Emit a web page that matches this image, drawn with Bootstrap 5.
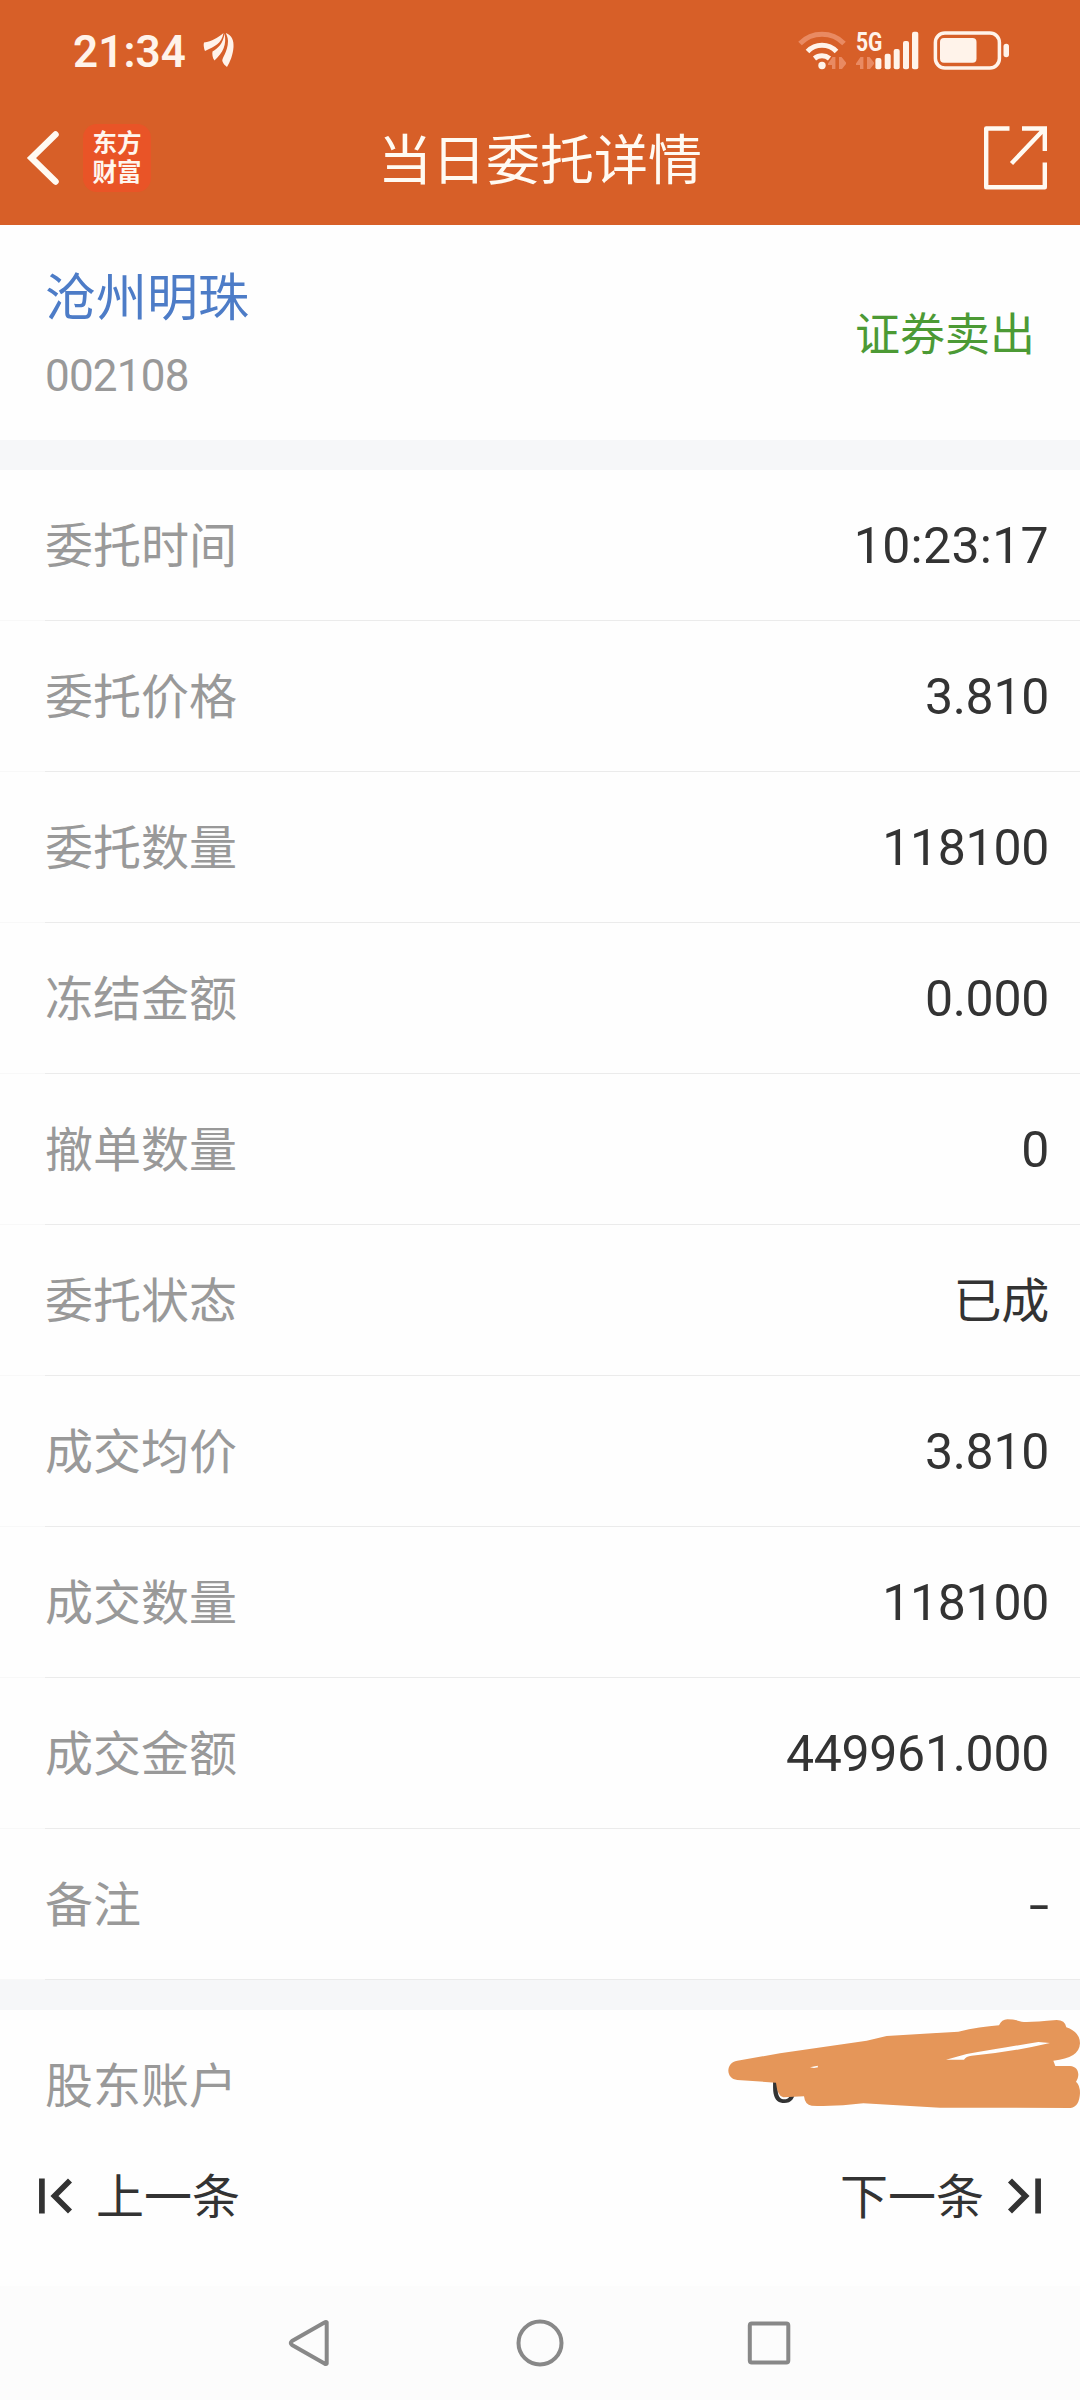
<!DOCTYPE html>
<html lang="zh-CN">
<head>
<meta charset="utf-8">
<meta name="viewport" content="width=device-width, initial-scale=1">
<title>当日委托详情</title>
<link href="https://cdn.jsdelivr.net/npm/bootstrap@5.3.0/dist/css/bootstrap.min.css" rel="stylesheet">
<style>
  body { width: 1080px; height: 2400px; overflow: hidden; background: #fefefe; color: #333; font-family: Roboto, "Noto Sans CJK SC", sans-serif; line-height: 1; }
  svg { display: block; flex: none; }
  .top-area { height: 225px; background: #d75f28; color: #fffaf2; }
  .status-bar { height: 100px; padding: 0 68px 0 73px; }
  .clock { font-size: 44px; font-weight: 600; letter-spacing: .1px; color: #fff3ea; margin-right: 17px; padding-top: 3px; }
  .title-bar { height: 125px; padding: 0 33px 10px 26px; }
  .app-logo { width: 68px; height: 68px; border-radius: 14px; background: #e95427; font-size: 24.5px; font-weight: 700; line-height: 29px; color: #fff6ee; margin-left: 23px; }
  .page-title { font-size: 54px; font-weight: 400; padding-top: 9px; }
  .stock-card { height: 215px; padding: 6px 45px 0; }
  .stock-name { font-size: 51px; color: #4d7cc7; }
  .stock-code { font-size: 44px; letter-spacing: -.8px; color: #999; margin-top: 30px; }
  .side-tag { font-size: 45px; color: #4c9a35; }
  .band { height: 30px; background: #f6f7f9; }
  .entry { height: 151px; padding: 0 31px 0 45px; background: linear-gradient(90deg, #f8f8f8 45px, #ebebeb 45px) bottom / 100% 1px no-repeat; }
  .entry-key { font-size: 48px; color: #999; padding-top: 3px; }
  .entry-val { font-size: 50px; letter-spacing: -.3px; }
  .entry-val.clocked { letter-spacing: .3px; }
  .entry-val.han { font-size: 48px; padding-top: 3px; }
  .entry-val.empty { transform: scaleX(1.45); transform-origin: right; }
  .account { background: none; }
  .scribble { right: 0; top: -20px; }
  .pager { height: 125px; padding: 0 39px 56px; font-size: 48px; }
  .pager span { padding-top: 4px; }
  .sys-nav { height: 114px; background: #fcfcfc; padding: 0 289px 0 288px; }
</style>
<script src="https://cdn.jsdelivr.net/npm/bootstrap@5.3.0/dist/js/bootstrap.bundle.min.js"></script>
</head>
<body>
<header class="top-area">
  <div class="status-bar d-flex align-items-center justify-content-between">
    <div class="d-flex align-items-center">
      <span class="clock">21:34</span>
      <svg width="32" height="36" viewBox="0 0 32 36" fill="#fff3ea">
        <path d="M1 10.500C9 9.500 15 5.500 20.500 1 18.500 12 12 14 2 19Q0 14 1 10.500z"/>
        <path d="M21.500 1.500C24 12 20 21 11.500 28.500 9.500 26 9 22 9.500 19.500 15 16 20 12 21.500 1.500z"/>
        <path d="M22.800 1C29 3 31 9 30.500 15 30 23 27 30 24 35 22 33.500 20.500 32 19.500 29.500 18 27 25 20 25 9 24.800 5 23.500 3 22.800 1z"/>
      </svg>
    </div>
    <svg width="222" height="50" viewBox="0 0 222 50" fill="#fff3ea">
      <g fill="none" stroke="#fff3ea" stroke-width="5">
        <path stroke="#e98a62" d="M10 18.500A31 31 0 0 1 54 18.500"/>
        <path d="M17.500 26.500A20 20 0 0 1 46.500 26.500"/>
        <path d="M24.500 33.500A12 12 0 0 1 39.500 33.500"/>
      </g>
      <circle cx="32" cy="40.500" r="3.700"/>
      <g fill="#e98a62">
        <path id="traffic" d="M45.400 32v12h-3.400v-4h-4v-1.500l4.500-6.500zM49 32h2.500l4.500 5.500v1.500l-4 5h-3z"/>
        <use href="#traffic" x="28"/>
      </g>
      <text x="66" y="25.800" font-size="26" font-weight="700" textLength="26.500" lengthAdjust="spacingAndGlyphs">5G</text>
      <rect x="85.400" y="33" width="6" height="11.300" rx="2"/>
      <rect x="94.700" y="28.700" width="6" height="15.600" rx="2"/>
      <rect x="103.700" y="24" width="6" height="20.300" rx="2"/>
      <rect x="113" y="16" width="6" height="28.300" rx="2"/>
      <rect x="122" y="6.700" width="6.300" height="37.600" rx="2"/>
      <rect x="145.400" y="8" width="64" height="35" rx="9.500" fill="none" stroke="#fff3ea" stroke-width="3.500"/>
      <rect x="150" y="13" width="36.500" height="24.700" rx="4"/>
      <rect x="213.500" y="18.700" width="5.500" height="13.500" rx="2.700"/>
    </svg>
  </div>
  <div class="title-bar d-flex align-items-center justify-content-between position-relative">
    <div class="d-flex align-items-center">
      <svg width="34" height="56" viewBox="0 0 34 56" fill="none" stroke="#fffaf2" stroke-width="6.500" stroke-linecap="round" stroke-linejoin="miter"><path d="M29.500 4.500L5.500 28l24 23.500"/></svg>
      <div class="app-logo d-flex flex-column align-items-center justify-content-center"><span>东方</span><span>财富</span></div>
    </div>
    <h1 class="page-title m-0 position-absolute start-50 translate-middle-x text-nowrap">当日委托详情</h1>
    <svg width="64" height="64" viewBox="0 0 64 64" fill="none" stroke="#fffaf2" stroke-width="4.400">
      <path stroke-linejoin="round" d="M26.500 2.500H3.200V61.200H61.800V36.500"/>
      <path d="M39 2.500H61.800V25M61.800 2.500L28.500 37.500"/>
    </svg>
  </div>
</header>

<main>
  <section class="stock-card d-flex align-items-center justify-content-between">
    <div>
      <div class="stock-name">沧州明珠</div>
      <div class="stock-code">002108</div>
    </div>
    <div class="side-tag">证券卖出</div>
  </section>
  <div class="band"></div>
  <section>
    <div class="entry d-flex align-items-center justify-content-between"><span class="entry-key">委托时间</span><span class="entry-val clocked">10:23:17</span></div>
    <div class="entry d-flex align-items-center justify-content-between"><span class="entry-key">委托价格</span><span class="entry-val">3.810</span></div>
    <div class="entry d-flex align-items-center justify-content-between"><span class="entry-key">委托数量</span><span class="entry-val">118100</span></div>
    <div class="entry d-flex align-items-center justify-content-between"><span class="entry-key">冻结金额</span><span class="entry-val">0.000</span></div>
    <div class="entry d-flex align-items-center justify-content-between"><span class="entry-key">撤单数量</span><span class="entry-val">0</span></div>
    <div class="entry d-flex align-items-center justify-content-between"><span class="entry-key">委托状态</span><span class="entry-val han">已成</span></div>
    <div class="entry d-flex align-items-center justify-content-between"><span class="entry-key">成交均价</span><span class="entry-val">3.810</span></div>
    <div class="entry d-flex align-items-center justify-content-between"><span class="entry-key">成交数量</span><span class="entry-val">118100</span></div>
    <div class="entry d-flex align-items-center justify-content-between"><span class="entry-key">成交金额</span><span class="entry-val">449961.000</span></div>
    <div class="entry d-flex align-items-center justify-content-between"><span class="entry-key">备注</span><span class="entry-val empty">-</span></div>
  </section>
  <div class="band"></div>
  <section class="entry account d-flex align-items-center justify-content-between position-relative">
    <span class="entry-key">股东账户</span><span class="entry-val" style="margin-right:251px">0</span>
    <svg class="scribble position-absolute" width="380" height="140" viewBox="0 0 1140 420" fill="#e59659">
      <path fill-rule="evenodd" d="M112 212L240 190 500 152 560 138 775 125Q840 110 897 106 905 88 922 88 945 88 965 95 985 98 1070 90 1095 90 1099 112 1140 126 1140 160 1138 205 1060 212L1066 228H1110C1138 230 1140 258 1128 275Q1140 285 1140 310 1138 350 1112 354L720 353 490 340Q410 350 335 347 315 345 312 319L250 322Q232 318 228 278L112 270C76 268 76 216 112 212zM738 209H792Q798 198 815 197 930 187 1050 159L1015 156Q930 170 800 192zM330 232l12 2 12-2-1-5z"/>
    </svg>
  </section>
</main>

<footer>
  <div class="pager d-flex align-items-center justify-content-between">
    <div class="d-flex align-items-center">
      <svg width="34" height="36" viewBox="0 0 34 36" fill="none" stroke="#333" stroke-width="5.700"><path d="M2.900 .5v35M31 2.500L15.500 18 31 33.500"/></svg>
      <span style="margin-left:23px">上一条</span>
    </div>
    <div class="d-flex align-items-center">
      <span style="margin-right:23px">下一条</span>
      <svg width="34" height="36" viewBox="0 0 34 36" fill="none" stroke="#333" stroke-width="5.700"><path d="M31.100 .5v35M3 2.500L18.500 18 3 33.500"/></svg>
    </div>
  </div>
  <nav class="sys-nav d-flex align-items-center justify-content-between">
    <svg width="45" height="48" viewBox="0 0 45 48" fill="none" stroke="#888" stroke-width="4" stroke-linejoin="round"><path d="M38.700 3.500V44.500Q38 45.500 36.500 44.500L4 26Q1.500 24 4 22L36.500 3.500Q38 2.500 38.700 3.500z"/></svg>
    <svg width="48" height="48" viewBox="0 0 48 48" fill="none" stroke="#888" stroke-width="4"><circle cx="24" cy="24" r="21.500"/></svg>
    <svg width="44" height="44" viewBox="0 0 44 44" fill="none" stroke="#888" stroke-width="4"><rect x="2.800" y="2.500" width="38.500" height="39" rx="2"/></svg>
  </nav>
</footer>
</body>
</html>
